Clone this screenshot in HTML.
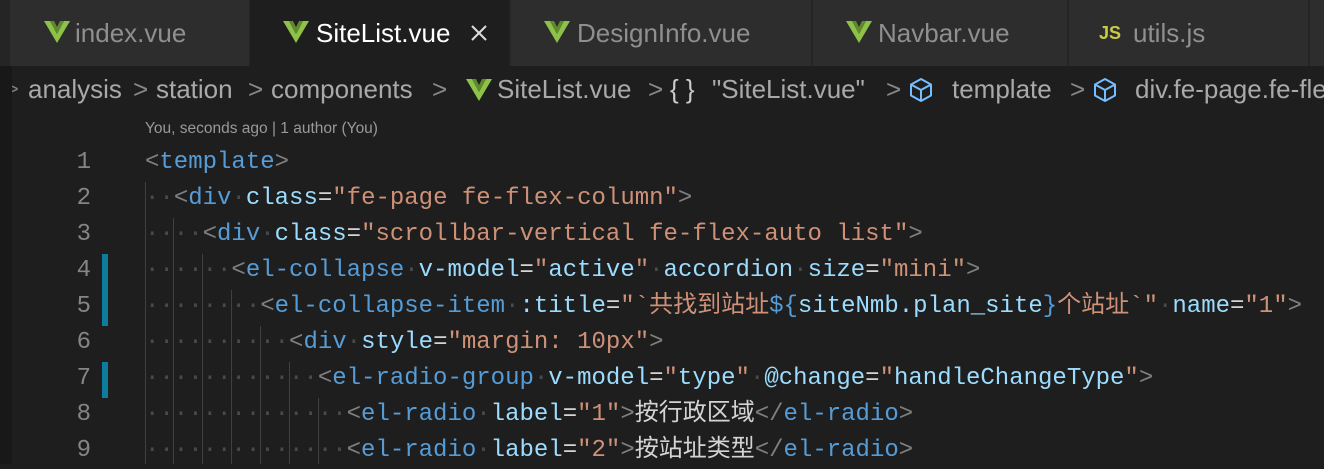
<!DOCTYPE html>
<html><head><meta charset="utf-8"><style>
*{margin:0;padding:0;box-sizing:border-box}
body{width:1324px;height:464px;background:#1e1e1e;overflow:hidden;position:relative;font-family:"Liberation Sans","Noto Sans CJK SC",sans-serif}
.strip{position:absolute;left:0;top:66px;width:12px;height:398px;background:#181818}
.tabs{position:absolute;left:0;top:0;width:1324px;height:66px;background:#252526}
.tab{position:absolute;top:0;height:66px;background:#2d2d2d;color:#8f8f8f;font-size:26px;line-height:66px;border-right:1px solid #252526}
.tab.act{background:#1e1e1e;color:#fff}
.tab svg{position:absolute;top:21px}
.tab span{position:absolute;top:0}
.bc{position:absolute;top:70px;left:0;width:1324px;height:38px;overflow:hidden;font-size:26px;line-height:38px;color:#a9a9a9;white-space:pre}
.bc > *{position:absolute;top:0}
.lens{position:absolute;left:145px;top:117px;font-size:15.5px;color:#999;line-height:24px}
.ln{position:absolute;right:1233px;font-family:"Liberation Mono",monospace;font-size:24px;color:#858585;line-height:36px;text-align:right;width:60px}
.code{position:absolute;left:145px;height:36px;font-family:"Liberation Mono",monospace;font-size:24px;line-height:36px;white-space:pre;color:#d4d4d4}
.cj{font-family:"Noto Sans CJK SC",sans-serif;line-height:0}
.p{color:#808080}.t{color:#569cd6}.a{color:#9cdcfe}.s{color:#ce9178}.w{color:#4a4a4a}
.g{position:absolute;width:1px;background:#404040}
.m{position:absolute;left:102px;width:6px;background:#0c7d9d}
</style></head><body>
<div class="tabs">
 <div class="tab" style="left:0;width:250px;border-left:10px solid #252526">
  <svg style="left:34px" width="26" height="22" viewBox="0 0 26 22"><path d="M0 0h6l7 13 7-13h6L13 22z" fill="#8dc149"/><path d="M6 0h4l3 6 3-6h4l-7 13z" fill="#5f8a2c"/></svg>
  <span style="left:65px">index.vue</span></div>
 <div class="tab act" style="left:250px;width:260px">
  <svg style="left:33px" width="26" height="22" viewBox="0 0 26 22"><path d="M0 0h6l7 13 7-13h6L13 22z" fill="#8dc149"/><path d="M6 0h4l3 6 3-6h4l-7 13z" fill="#5f8a2c"/></svg>
  <span style="left:66px">SiteList.vue</span>
  <svg style="left:220px;top:24px" width="18" height="18" viewBox="0 0 18 18"><path d="M2 2L16 16M16 2L2 16" stroke="#ddd" stroke-width="2"/></svg></div>
 <div class="tab" style="left:511px;width:301px">
  <svg style="left:33px" width="26" height="22" viewBox="0 0 26 22"><path d="M0 0h6l7 13 7-13h6L13 22z" fill="#8dc149"/><path d="M6 0h4l3 6 3-6h4l-7 13z" fill="#5f8a2c"/></svg>
  <span style="left:66px">DesignInfo.vue</span></div>
 <div class="tab" style="left:813px;width:255px">
  <svg style="left:33px" width="26" height="22" viewBox="0 0 26 22"><path d="M0 0h6l7 13 7-13h6L13 22z" fill="#8dc149"/><path d="M6 0h4l3 6 3-6h4l-7 13z" fill="#5f8a2c"/></svg>
  <span style="left:65px">Navbar.vue</span></div>
 <div class="tab" style="left:1069px;width:240px">
  <span style="left:30px;color:#cbcb41;font-weight:bold;font-size:18px">JS</span>
  <span style="left:64px">utils.js</span></div>
 <div class="tab" style="left:1310px;width:20px"></div>
</div>
<div class="bc">
 <span style="left:8px;font-size:18px;color:#888">&gt;</span>
 <span style="left:28px">analysis</span><span style="left:133px;color:#888">&gt;</span>
 <span style="left:156px">station</span><span style="left:248px;color:#888">&gt;</span>
 <span style="left:271px">components</span><span style="left:432px;color:#888">&gt;</span>
 <svg style="left:466px;top:9px" width="26" height="22" viewBox="0 0 26 22"><path d="M0 0h6l7 13 7-13h6L13 22z" fill="#8dc149"/><path d="M6 0h4l3 6 3-6h4l-7 13z" fill="#5f8a2c"/></svg>
 <span style="left:497px">SiteList.vue</span><span style="left:648px;color:#888">&gt;</span>
 <span style="left:670px;color:#ccc">{ }</span>
 <span style="left:712px">"SiteList.vue"</span><span style="left:886px;color:#888">&gt;</span>
 <svg style="left:908px;top:7px" width="26" height="26" viewBox="0 0 26 26"><path d="M13 2L23 7.5V18.5L13 24L3 18.5V7.5z M3 7.5L13 13L23 7.5 M13 13V24" fill="none" stroke="#75beff" stroke-width="2" stroke-linejoin="round"/></svg>
 <span style="left:952px">template</span><span style="left:1070px;color:#888">&gt;</span>
 <svg style="left:1092px;top:7px" width="26" height="26" viewBox="0 0 26 26"><path d="M13 2L23 7.5V18.5L13 24L3 18.5V7.5z M3 7.5L13 13L23 7.5 M13 13V24" fill="none" stroke="#75beff" stroke-width="2" stroke-linejoin="round"/></svg>
 <span style="left:1135px">div.fe-page.fe-flex-column</span>
</div>
<div class="strip"></div>
<div class="lens">You, seconds ago | 1 author (You)</div>

<div class="ln" style="top:145px">1</div><div class="ln" style="top:181px">2</div><div class="ln" style="top:217px">3</div>
<div class="ln" style="top:253px">4</div><div class="ln" style="top:289px">5</div><div class="ln" style="top:325px">6</div>
<div class="ln" style="top:361px">7</div><div class="ln" style="top:397px">8</div><div class="ln" style="top:433px">9</div>
<div class="m" style="top:254px;height:72px"></div><div class="m" style="top:362px;height:36px"></div>

<div class="g" style="left:145px;top:182px;height:282px"></div>
<div class="g" style="left:173px;top:218px;height:246px"></div>
<div class="g" style="left:202px;top:254px;height:210px"></div>
<div class="g" style="left:231px;top:290px;height:174px"></div>
<div class="g" style="left:260px;top:326px;height:138px"></div>
<div class="g" style="left:289px;top:362px;height:102px"></div>
<div class="g" style="left:318px;top:398px;height:66px"></div>

<div class="code" style="top:145px"><span class="p">&lt;</span><span class="t">template</span><span class="p">&gt;</span></div>
<div class="code" style="top:181px"><span class="w">··</span><span class="p">&lt;</span><span class="t">div</span><span class="w">·</span><span class="a">class</span>=<span class="s">"fe-page fe-flex-column"</span><span class="p">&gt;</span></div>
<div class="code" style="top:217px"><span class="w">····</span><span class="p">&lt;</span><span class="t">div</span><span class="w">·</span><span class="a">class</span>=<span class="s">"scrollbar-vertical fe-flex-auto list"</span><span class="p">&gt;</span></div>
<div class="code" style="top:253px"><span class="w">······</span><span class="p">&lt;</span><span class="t">el-collapse</span><span class="w">·</span><span class="a">v-model</span>=<span class="s">"</span><span class="a">active</span><span class="s">"</span><span class="w">·</span><span class="a">accordion</span><span class="w">·</span><span class="a">size</span>=<span class="s">"mini"</span><span class="p">&gt;</span></div>
<div class="code" style="top:289px"><span class="w">········</span><span class="p">&lt;</span><span class="t">el-collapse-item</span><span class="w">·</span><span class="a">:title</span>=<span class="s">"`<span class="cj">共找到站址</span></span><span class="t">${</span><span class="a">siteNmb.plan_site</span><span class="t">}</span><span class="s"><span class="cj">个站址</span>`"</span><span class="w">·</span><span class="a">name</span>=<span class="s">"1"</span><span class="p">&gt;</span></div>
<div class="code" style="top:325px"><span class="w">··········</span><span class="p">&lt;</span><span class="t">div</span><span class="w">·</span><span class="a">style</span>=<span class="s">"margin: 10px"</span><span class="p">&gt;</span></div>
<div class="code" style="top:361px"><span class="w">············</span><span class="p">&lt;</span><span class="t">el-radio-group</span><span class="w">·</span><span class="a">v-model</span>=<span class="s">"</span><span class="a">type</span><span class="s">"</span><span class="w">·</span><span class="a">@change</span>=<span class="s">"</span><span class="a">handleChangeType</span><span class="s">"</span><span class="p">&gt;</span></div>
<div class="code" style="top:397px"><span class="w">··············</span><span class="p">&lt;</span><span class="t">el-radio</span><span class="w">·</span><span class="a">label</span>=<span class="s">"1"</span><span class="p">&gt;</span><span class="cj">按行政区域</span><span class="p">&lt;/</span><span class="t">el-radio</span><span class="p">&gt;</span></div>
<div class="code" style="top:433px"><span class="w">··············</span><span class="p">&lt;</span><span class="t">el-radio</span><span class="w">·</span><span class="a">label</span>=<span class="s">"2"</span><span class="p">&gt;</span><span class="cj">按站址类型</span><span class="p">&lt;/</span><span class="t">el-radio</span><span class="p">&gt;</span></div>
</body></html>
